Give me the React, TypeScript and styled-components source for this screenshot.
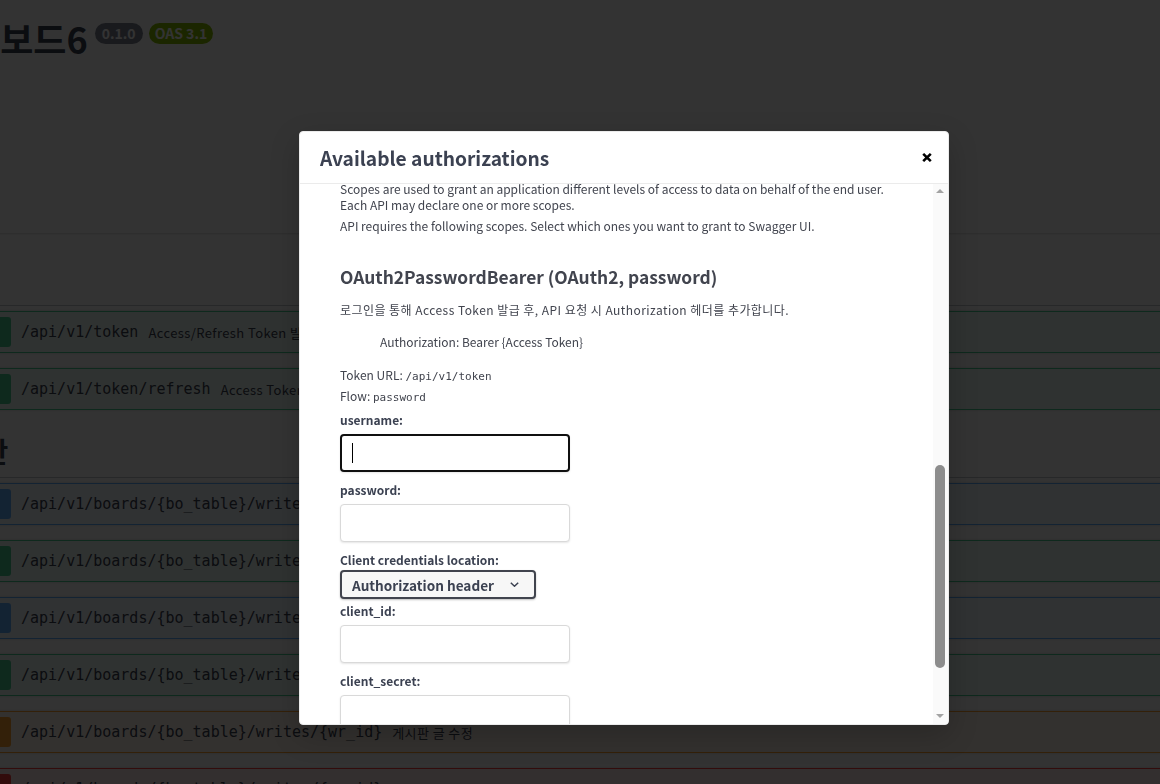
import React, { useLayoutEffect, useRef, useState } from 'react';
import styled, { createGlobalStyle } from 'styled-components';

const sans = `"Noto Sans CJK KR", "Noto Sans", sans-serif`;
const mono = `"DejaVu Sans Mono", "Liberation Mono", monospace`;

const GlobalStyle = createGlobalStyle`
  html, body {
    margin: 0;
    padding: 0;
    overflow: hidden;
    background: #fff;
  }
  body {
    font-family: ${sans};
    color: #3b4151;
  }
  * { box-sizing: border-box; }
`;

type Method = 'get' | 'post' | 'put' | 'delete';

const methodColor: Record<Method, { line: string, bg: string }> = {
    get: { line: '#61affe', bg: 'rgba(97,175,254,.1)' },
    post: { line: '#49cc90', bg: 'rgba(73,204,144,.1)' },
    put: { line: '#fca130', bg: 'rgba(252,161,48,.1)' },
    delete: { line: '#f93e3e', bg: 'rgba(249,62,62,.1)' },
};

interface Op {
    method: Method,
    path: string,
    summary: string
}

const tags: { name: string, ops: Op[] }[] = [
    {
        name: '인증',
        ops: [
            { method: 'post', path: '/api/v1/token', summary: 'Access/Refresh Token 발급' },
            { method: 'post', path: '/api/v1/token/refresh', summary: 'Access Token 재발급' },
        ]
    },
    {
        name: '게시판',
        ops: [
            { method: 'get', path: '/api/v1/boards/{bo_table}/writes', summary: '게시판 글 목록 조회' },
            { method: 'post', path: '/api/v1/boards/{bo_table}/writes', summary: '게시판 글 작성' },
            { method: 'get', path: '/api/v1/boards/{bo_table}/writes/{wr_id}', summary: '게시판 글 상세 조회' },
            { method: 'post', path: '/api/v1/boards/{bo_table}/writes/{wr_id}/comments', summary: '댓글 작성' },
            { method: 'put', path: '/api/v1/boards/{bo_table}/writes/{wr_id}', summary: '게시판 글 수정' },
            { method: 'delete', path: '/api/v1/boards/{bo_table}/writes/{wr_id}', summary: '게시판 글 삭제' },
        ]
    }
];

/* ---------- background swagger page ---------- */

const Page = styled.div`
    width: 1560px;
    margin-left: -75px;
`;

const Info = styled.section`
    height: 161px;
    padding-top: 12px;
`;

const Title = styled.h2`
    margin: 0 0 0 9px;
    display: flex;
    align-items: flex-start;
    font-size: 36px;
    font-weight: 700;
    line-height: 52px;
    color: #3b4151;
`;

const Badge = styled.span<{ $bg: string, $gap: number, $pad: number }>`
    margin: 11px 0 0 ${({ $gap }) => $gap}px;
    height: 21px;
    padding: 0 ${({ $pad }) => $pad}px;
    border-radius: 57px;
    background: ${({ $bg }) => $bg};
    color: #fff;
    font-size: 14px;
    font-weight: 700;
    line-height: 21px;
`;

const SchemeBar = styled.div`
    height: 72px;
    margin-bottom: 20px;
    background: #fff;
    box-shadow: 0 1px 2px 0 rgba(0,0,0,.15);
`;

const TagHeading = styled.h3`
    display: flex;
    align-items: center;
    height: 53px;
    margin: 0 0 5px;
    padding: 0 20px 0 6px;
    border-bottom: 1px solid rgba(59,65,81,.3);
    font-size: 28px;
    font-weight: 700;
    color: #3b4151;
`;

const Opblock = styled.div<{ $method: Method }>`
    display: flex;
    align-items: center;
    height: 42px;
    margin-bottom: 15px;
    padding: 5px;
    border: 1px solid ${({ $method }) => methodColor[$method].line};
    border-radius: 4px;
    background: ${({ $method }) => methodColor[$method].bg};
    box-shadow: 0 0 3px rgba(0,0,0,.19);
`;

const MethodTag = styled.span<{ $method: Method }>`
    min-width: 80px;
    padding: 6px 0;
    border-radius: 3px;
    background: ${({ $method }) => methodColor[$method].line};
    color: #fff;
    font-size: 14px;
    font-weight: 700;
    line-height: 18px;
    text-align: center;
    text-transform: uppercase;
`;

const OpPath = styled.span`
    padding: 0 10px;
    font-family: ${mono};
    font-size: 15px;
    color: #3b4151;
    white-space: nowrap;
`;

const OpSummary = styled.span`
    font-size: 13px;
    letter-spacing: 0.4px;
    color: #3b4151;
    white-space: nowrap;
`;

/* ---------- modal ---------- */

const Backdrop = styled.div`
    position: fixed;
    inset: 0;
    background: rgba(0,0,0,.8);
`;

const Modal = styled.div`
    position: fixed;
    left: 299px;
    top: 131px;
    width: 650px;
    background: #fff;
    border: 1px solid #ebebeb;
    border-radius: 4px;
    box-shadow: 0 10px 30px 0 rgba(0,0,0,.2);
    font-family: ${sans};
`;

const ModalHeader = styled.header`
    display: flex;
    align-items: center;
    height: 52px;
    border-bottom: 1px solid #ebebeb;
`;

const ModalTitle = styled.h3`
    flex: 1;
    margin: 0;
    padding: 0 20px;
    font-size: 19.2px;
    font-weight: 600;
    color: #3b4151;
`;

const CloseButton = styled.button`
    display: flex;
    align-items: center;
    padding: 0 16px 0 10px;
    border: none;
    background: none;
    cursor: pointer;
`;

const Content = styled.div`
    height: 540px;
    padding: 20px;
    overflow-y: auto;
    scrollbar-width: none;

    &::-webkit-scrollbar {
        display: none;
    }
`;

/* drawn scrollbar, laid over the right edge of the content */
const Rail = styled.div`
    position: absolute;
    right: 0;
    top: 52px;
    width: 15px;
    height: 540px;
    background: #fafafa;
    border-bottom-right-radius: 3px;
`;

const Arrow = styled.div<{ $dir: 'up' | 'down' }>`
    position: absolute;
    left: 3px;
    ${({ $dir }) => $dir === 'up' ? 'top: 5px;' : 'bottom: 6px;'}
    width: 0;
    height: 0;
    border-left: 4px solid transparent;
    border-right: 4px solid transparent;
    ${({ $dir }) => $dir === 'up' ? 'border-bottom: 4px solid #a3a3a3;' : 'border-top: 4px solid #a3a3a3;'}
`;

const Thumb = styled.div`
    position: absolute;
    left: 2px;
    width: 10px;
    border-radius: 5px;
    background: #8d8d8d;
`;

const AuthContainer = styled.div`
    display: flex;
    flex-direction: column;
    padding: 10px 20px;
    margin-bottom: 10px;
    border-bottom: 1px solid #ebebeb;
`;

const ScopeDef = styled.div`
    display: flex;
    flex-direction: column;
    padding-bottom: 26px;
`;

const SchemeName = styled.h4`
    margin: 0 0 13px;
    font-size: 17.4px;
    font-weight: 600;
    line-height: 24px;
    color: #41444e;
`;

const Text = styled.p<{ $mb?: number, $indent?: number, $wide?: boolean }>`
    margin: 0 0 ${({ $mb = 5 }) => $mb}px ${({ $indent = 0 }) => $indent}px;
    font-size: 12px;
    line-height: 16px;
    letter-spacing: ${({ $wide }) => $wide ? '0.45px' : 'normal'};
    color: #41444e;
`;

const Code = styled.code`
    font-family: ${mono};
    font-size: 11px;
    letter-spacing: 0;
    color: #41444e;
`;

const Label = styled.label`
    display: block;
    font-size: 12px;
    font-weight: 700;
    line-height: 17px;
    color: #3b4151;
`;

const InputBox = styled.div`
    position: relative;
    width: 230px;
    margin: 6px 0 9px;
`;

const Input = styled.input<{ $focused?: boolean }>`
    display: block;
    width: 230px;
    height: 38px;
    margin: 0;
    padding: 8px 10px;
    border: ${({ $focused }) => $focused ? '2px solid #101010' : '1px solid #d9d9d9'};
    border-radius: 4px;
    background: #fff;
    box-shadow: 0 1px 2px rgba(0,0,0,.1);
    font-family: ${sans};
    font-size: 14px;
    outline: none;
`;

const Caret = styled.span`
    position: absolute;
    left: 12px;
    top: 9px;
    width: 1px;
    height: 20px;
    background: #000;
`;

const SelectBox = styled.div`
    position: relative;
    align-self: flex-start;
    margin: 2px 0 3px;

    svg {
        position: absolute;
        right: 17px;
        top: 12px;
        pointer-events: none;
    }
`;

const Select = styled.select`
    display: block;
    height: 29px;
    padding: 0 40px 0 10px;
    border: 2px solid #41444e;
    border-radius: 4px;
    background: #f7f7f7;
    box-shadow: 0 1px 2px 0 rgba(0,0,0,.25);
    font-family: ${sans};
    font-size: 13.6px;
    font-weight: 700;
    color: #3b4151;
    appearance: none;
`;

const BtnWrap = styled.div`
    display: flex;
    justify-content: center;
    gap: 10px;
    padding: 10px 0;
`;

const Btn = styled.button<{ $color: string }>`
    padding: 5px 23px;
    border: 2px solid ${({ $color }) => $color};
    border-radius: 4px;
    background: transparent;
    box-shadow: 0 1px 2px rgba(0,0,0,.1);
    color: ${({ $color }) => $color};
    font-family: ${sans};
    font-size: 14px;
    font-weight: 700;
`;

const Field: React.FC<{ label: string, type?: string, focused?: boolean }> = ({ label, type = 'text', focused }) => (
    <>
        <Label>{label}</Label>
        <InputBox>
            <Input type={type} $focused={focused} readOnly />
            {focused && <Caret />}
        </InputBox>
    </>
);

const Buttons = () => (
    <BtnWrap>
        <Btn $color="#49cc90">Authorize</Btn>
        <Btn $color="#808080">Close</Btn>
    </BtnWrap>
);

const TRACK_START = 14;
const TRACK_LEN = 512;

const App: React.FC = () => {
    const contentRef = useRef<HTMLDivElement>(null);
    const scopeRef = useRef<HTMLDivElement>(null);
    const [thumb, setThumb] = useState({ top: 279, height: 205 });

    useLayoutEffect(() => {
        const place = () => {
            const c = contentRef.current;
            const s = scopeRef.current;
            if (!c || !s) return;
            c.scrollTop = 0;
            c.scrollTop = s.getBoundingClientRect().top - c.getBoundingClientRect().top + 3;
            setThumb({
                top: TRACK_START + (c.scrollTop / c.scrollHeight) * TRACK_LEN,
                height: (c.clientHeight / c.scrollHeight) * TRACK_LEN,
            });
        };
        place();
        document.fonts?.ready.then(place);
    }, []);

    return (
        <>
            <GlobalStyle />
            <Page>
                <Info>
                    <Title>
                        그누보드6
                        <Badge $bg="#7d8492" $gap={7} $pad={7}>0.1.0</Badge>
                        <Badge $bg="#89bf04" $gap={6} $pad={6}>OAS 3.1</Badge>
                    </Title>
                </Info>
                <SchemeBar />
                {tags.map(tag => (
                    <section key={tag.name}>
                        <TagHeading>{tag.name}</TagHeading>
                        {tag.ops.map((op, i) => (
                            <Opblock key={i} $method={op.method}>
                                <MethodTag $method={op.method}>{op.method}</MethodTag>
                                <OpPath>{op.path}</OpPath>
                                <OpSummary>{op.summary}</OpSummary>
                            </Opblock>
                        ))}
                    </section>
                ))}
            </Page>

            <Backdrop />
            <Modal>
                <ModalHeader>
                    <ModalTitle>Available authorizations</ModalTitle>
                    <CloseButton aria-label="Close">
                        <svg width="10" height="9" viewBox="0 0 10 9">
                            <path d="M1.2 0.9 L8.8 8.1 M8.8 0.9 L1.2 8.1" stroke="#000" strokeWidth="2.6" fill="none" />
                        </svg>
                    </CloseButton>
                </ModalHeader>
                <Content ref={contentRef}>
                    <div>
                        <AuthContainer>
                            <SchemeName>APIKeyHeader (apiKey)</SchemeName>
                            <Text>헤더에 API Key를 추가합니다.</Text>
                            <Text>Name: <Code>Authorization</Code></Text>
                            <Text $mb={7}>In: <Code>header</Code></Text>
                            <Field label="Value:" />
                        </AuthContainer>
                        <AuthContainer>
                            <SchemeName>HTTPBearer (http, Bearer)</SchemeName>
                            <Text $mb={7}>Bearer 토큰을 입력합니다.</Text>
                            <Field label="Value:" />
                        </AuthContainer>
                        <AuthContainer>
                            <SchemeName>HTTPBasic (http, Basic)</SchemeName>
                            <Text>아이디와 비밀번호로 인증합니다.</Text>
                            <Text $mb={7}>Scheme: <Code>basic</Code></Text>
                            <Field label="Username:" />
                            <Field label="Password:" type="password" />
                        </AuthContainer>
                        <Buttons />
                    </div>
                    <AuthContainer>
                        <ScopeDef ref={scopeRef}>
                            <Text>
                                Scopes are used to grant an application different levels of access to data on behalf of the end user.
                                Each API may declare one or more scopes.
                            </Text>
                            <Text>API requires the following scopes. Select which ones you want to grant to Swagger UI.</Text>
                        </ScopeDef>
                        <SchemeName>OAuth2PasswordBearer (OAuth2, password)</SchemeName>
                        <Text $mb={16} $wide>로그인을 통해 Access Token 발급 후, API 요청 시 Authorization 헤더를 추가합니다.</Text>
                        <Text $mb={17} $indent={40}>Authorization: Bearer {'{Access Token}'}</Text>
                        <Text $mb={3}>Token URL: <Code>/api/v1/token</Code></Text>
                        <Text $mb={5}>Flow: <Code>password</Code></Text>
                        <Field label="username:" focused />
                        <Field label="password:" type="password" />
                        <Label>Client credentials location:</Label>
                        <SelectBox>
                            <Select defaultValue="header">
                                <option value="header">Authorization header</option>
                                <option value="body">Request body</option>
                            </Select>
                            <svg width="9" height="5" viewBox="0 0 9 5">
                                <path d="M0.8 0.8 L4.5 4.2 L8.2 0.8" stroke="#3b4151" strokeWidth="1.5" fill="none" />
                            </svg>
                        </SelectBox>
                        <Field label="client_id:" />
                        <Field label="client_secret:" type="password" />
                        <Buttons />
                    </AuthContainer>
                </Content>
                <Rail>
                    <Arrow $dir="up" />
                    <Thumb style={{ top: thumb.top, height: thumb.height }} />
                    <Arrow $dir="down" />
                </Rail>
            </Modal>
        </>
    );
};

export default App;
